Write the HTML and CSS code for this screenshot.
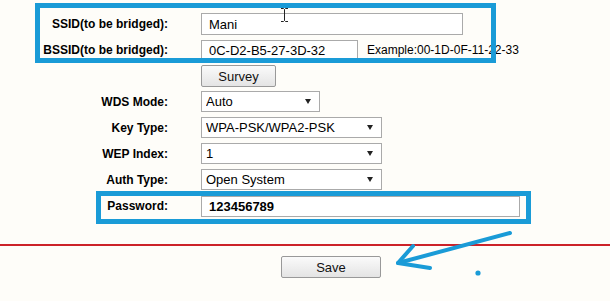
FILE: index.html
```html
<!DOCTYPE html>
<html>
<head>
  <title>Wireless Bridge Settings</title>
  <link rel="stylesheet" href="styles.css">
</head>
<body>
  <div class="page">
    <form class="wds" id="wdsForm">
      <label class="lbl" for="ssid">SSID(to be bridged):</label>
      <div class="ctl"><input type="text" id="ssid" class="txt ssid" value="Mani"></div>

      <label class="lbl" for="bssid">BSSID(to be bridged):</label>
      <div class="ctl">
        <input type="text" id="bssid" class="txt bssid" value="0C-D2-B5-27-3D-32">
        <span class="hint">Example:00-1D-0F-11-22-33</span>
      </div>

      <span class="lbl"></span>
      <div class="ctl"><input type="button" class="btn survey" value="Survey"></div>

      <label class="lbl" for="mode">WDS Mode:</label>
      <div class="ctl"><div class="sel short"><select id="mode"><option>Auto</option></select></div></div>

      <label class="lbl" for="keyType">Key Type:</label>
      <div class="ctl"><div class="sel"><select id="keyType"><option>WPA-PSK/WPA2-PSK</option></select></div></div>

      <label class="lbl" for="wepIndex">WEP Index:</label>
      <div class="ctl"><div class="sel"><select id="wepIndex"><option>1</option></select></div></div>

      <label class="lbl" for="authType">Auth Type:</label>
      <div class="ctl"><div class="sel"><select id="authType"><option>Open System</option></select></div></div>

      <label class="lbl" for="password">Password:</label>
      <div class="ctl"><input type="text" id="password" class="txt pass" value="123456789"></div>
    </form>

    <hr class="rule">

    <div class="actions">
      <input type="submit" form="wdsForm" class="btn save" value="Save">
    </div>

    <!-- hand drawn marks on top of the screenshot -->
    <div class="mark mark-ssid"></div>
    <div class="mark mark-pass"></div>
    <svg class="scribble" width="610" height="301" viewBox="0 0 610 301">
      <g fill="none" stroke="#1a9bd7" stroke-width="4" stroke-linecap="round" stroke-linejoin="round">
        <path d="M510 233 L398 263"/>
        <path d="M413 246 L398 263 L430 268"/>
      </g>
      <circle cx="478" cy="273" r="2.6" fill="#1a9bd7"/>
    </svg>
    <svg class="ibeam" width="9" height="16" viewBox="0 0 9 16">
      <path d="M1 1.5 H3.5 L4.5 2.5 L5.5 1.5 H8 M4.5 2.5 V13.5 M1 14.5 H3.5 L4.5 13.5 L5.5 14.5 H8" fill="none" stroke="#222" stroke-width="1"/>
    </svg>
  </div>
</body>
</html>
```

FILE: styles.css
```css
body {
  margin: 0;
  background-color: #fefdf9;
  font-family: "Liberation Sans", Arial, sans-serif;
  color: #000;
}
.page {
  position: relative;
  width: 610px;
  height: 301px;
  overflow: hidden;
}
.wds {
  display: grid;
  grid-template-columns: 168px auto;
  grid-auto-rows: 22px;
  column-gap: 33px;
  row-gap: 4px;
  padding-top: 13px;
  margin: 0;
}
.lbl {
  font-size: 12px;
  font-weight: bold;
  text-align: right;
  align-self: center;
}
.ctl {
  display: flex;
  align-items: center;
  gap: 9px;
}
.txt {
  box-sizing: border-box;
  height: 22px;
  margin: 0;
  padding: 0 7px;
  border: 1px solid #aaa;
  background: #fff;
  font-family: inherit;
  font-size: 13px;
  color: #000;
}
.ssid { width: 262px; }
.bssid { width: 157px; height: 21px; }
.pass {
  width: 319px;
  height: 21px;
  font-weight: bold;
}
.hint { font-size: 12px; }
.btn {
  box-sizing: border-box;
  height: 22px;
  margin: 0;
  padding: 0;
  border: 1px solid #999;
  border-radius: 2px;
  background: linear-gradient(#fafafa, #e4e4e4);
  font-family: inherit;
  font-size: 13px;
  color: #111;
}
.survey { width: 75px; }
.sel {
  position: relative;
  width: 181px;
  height: 22px;
}
.sel.short { width: 119px; }
.sel select {
  -webkit-appearance: none;
  appearance: none;
  box-sizing: border-box;
  width: 100%;
  height: 21px;
  margin: 0;
  padding: 0 4px;
  border: 1px solid #aaa;
  border-radius: 0;
  background: #fff;
  font-family: inherit;
  font-size: 13px;
  color: #000;
}
.sel::after {
  content: "";
  position: absolute;
  right: 9px;
  top: 8px;
  border-left: 3px solid transparent;
  border-right: 3px solid transparent;
  border-top: 5px solid #222;
}
.rule {
  margin: 27px 0 0;
  height: 2px;
  border: none;
  background-color: #cc2229;
}
.actions {
  padding: 10px 0 0 281px;
}
.save { width: 100px; }
.mark {
  position: absolute;
  border: 5px solid #1a9bd7;
  box-sizing: border-box;
}
.mark-ssid {
  left: 35px;
  top: 3px;
  width: 461px;
  height: 60px;
}
.mark-pass {
  left: 96px;
  top: 191px;
  width: 435px;
  height: 33px;
}
.scribble {
  position: absolute;
  left: 0;
  top: 0;
  pointer-events: none;
}
.ibeam {
  position: absolute;
  left: 280px;
  top: 7px;
}
```
